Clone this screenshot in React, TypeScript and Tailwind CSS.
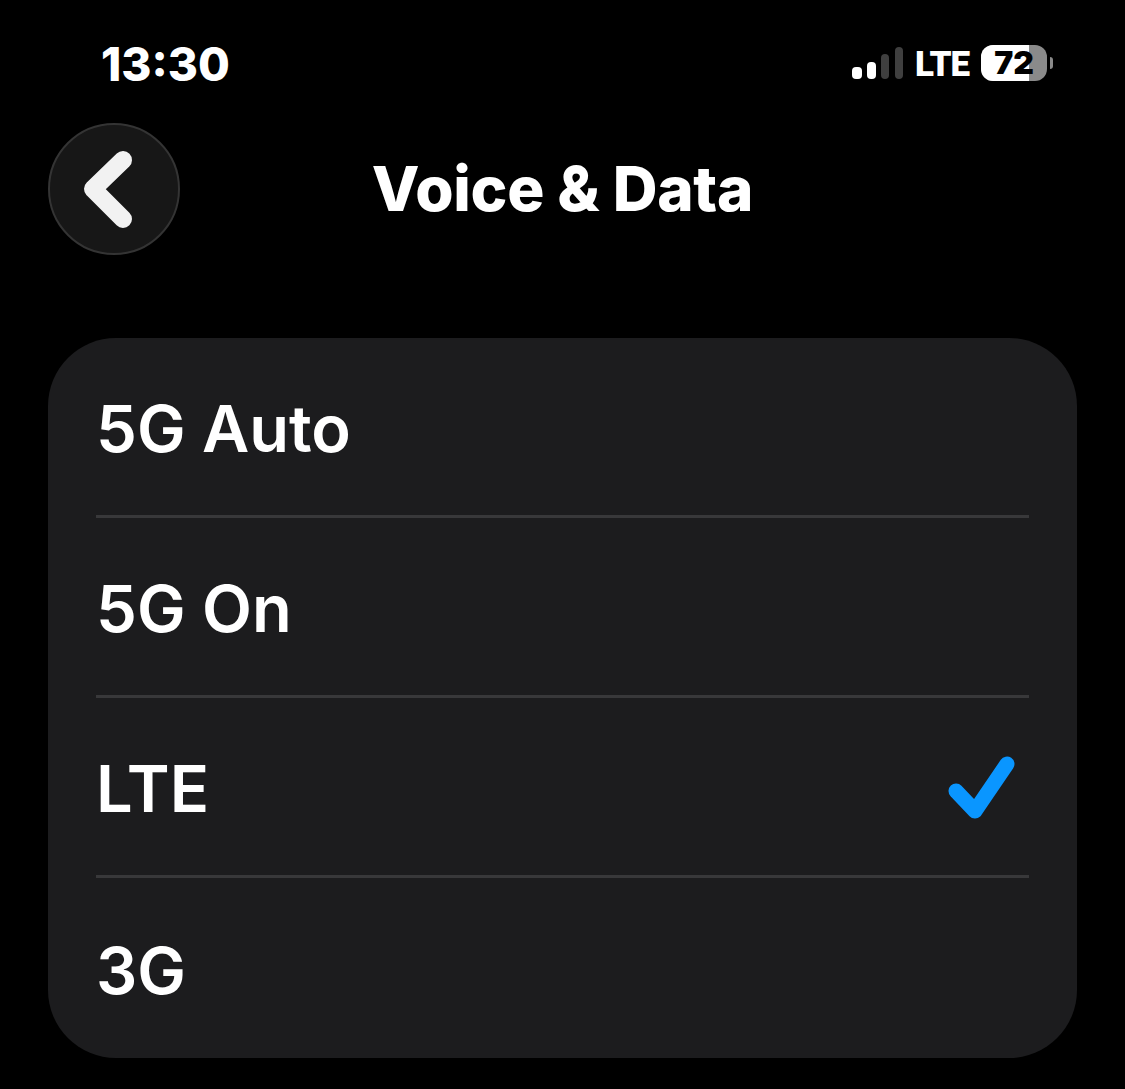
const options = ["5G Auto", "5G On", "LTE", "3G"];
const selected = "LTE";

function SignalBars() {
  return (
    <div className="flex items-end gap-[5px]">
      <span className="h-[12px] w-[10px] rounded-[4px] bg-white" />
      <span className="h-[17px] w-[9px] rounded-[4px] bg-white" />
      <span className="h-[25px] w-[8px] rounded-[4px] bg-[#3f3f3f]" />
      <span className="ml-px h-[32px] w-[8px] rounded-[4px] bg-[#3f3f3f]" />
    </div>
  );
}

function Battery() {
  return (
    <div className="flex items-center gap-[3px]">
      <div className="relative h-[36px] w-[66px] rounded-[12px] bg-[#8a8a8a]">
        <div className="h-full w-[48px] rounded-l-[12px] bg-white" />
        <span className="absolute inset-0 flex items-center justify-center text-[32px] font-black leading-[36px] text-black">
          72
        </span>
      </div>
      <span className="h-[12px] w-[3px] rounded-r-full bg-[#8a8a8a]" />
    </div>
  );
}

export default function App() {
  return (
    <div className="h-[1089px] w-[1125px] overflow-hidden bg-black font-['Inter',sans-serif] text-white">
      {/* Status bar */}
      <div className="flex h-[123px] items-start justify-between pl-[101px] pr-[72px]">
        <span className="mt-[38px] text-[46px] font-extrabold leading-[52px]">13:30</span>
        <div className="mt-[45px] flex h-[36px] items-center">
          <SignalBars />
          <span className="ml-[12px] mr-[12px] mt-[3px] w-[54px] font-['Roboto',sans-serif] text-[35px] font-black leading-[36px] tracking-[-1px]">
            LTE
          </span>
          <Battery />
        </div>
      </div>

      {/* Header */}
      <div className="grid h-[132px] grid-cols-[1fr_auto_1fr] items-center px-[48px]">
        <button className="flex h-[132px] w-[132px] items-center justify-center rounded-full border-2 border-[#343434] bg-[#171717]">
          <svg width="132" height="132" viewBox="0 0 132 132" fill="none" className="shrink-0">
            <path
              d="M75 37 L45 66 L75 96"
              stroke="#f2f2f2"
              strokeWidth="18"
              strokeLinecap="round"
              strokeLinejoin="round"
            />
          </svg>
        </button>
        <h1 className="text-[62px] font-extrabold leading-none tracking-[-0.3px]">Voice &amp; Data</h1>
        <span />
      </div>

      {/* Options card */}
      <div className="mx-[48px] mt-[83px] h-[720px] rounded-[68px] bg-[#1c1c1e] px-[48px]">
        {options.map((option, i) => (
          <div
            key={option}
            className={`flex h-[180px] items-center justify-between ${
              i < options.length - 1 ? "border-b-[3px] border-[#38383a]" : ""
            }`}
          >
            <span className="mt-[4px] text-[65px] font-semibold leading-none">{option}</span>
            {option === selected && (
              <svg width="70" height="70" viewBox="0 0 70 70" fill="none" className="mr-[13px] mt-[4px]">
                <path
                  d="M10 37 L29 57 L61 10"
                  stroke="#0a96ff"
                  strokeWidth="15"
                  strokeLinecap="round"
                  strokeLinejoin="round"
                />
              </svg>
            )}
          </div>
        ))}
      </div>
    </div>
  );
}
